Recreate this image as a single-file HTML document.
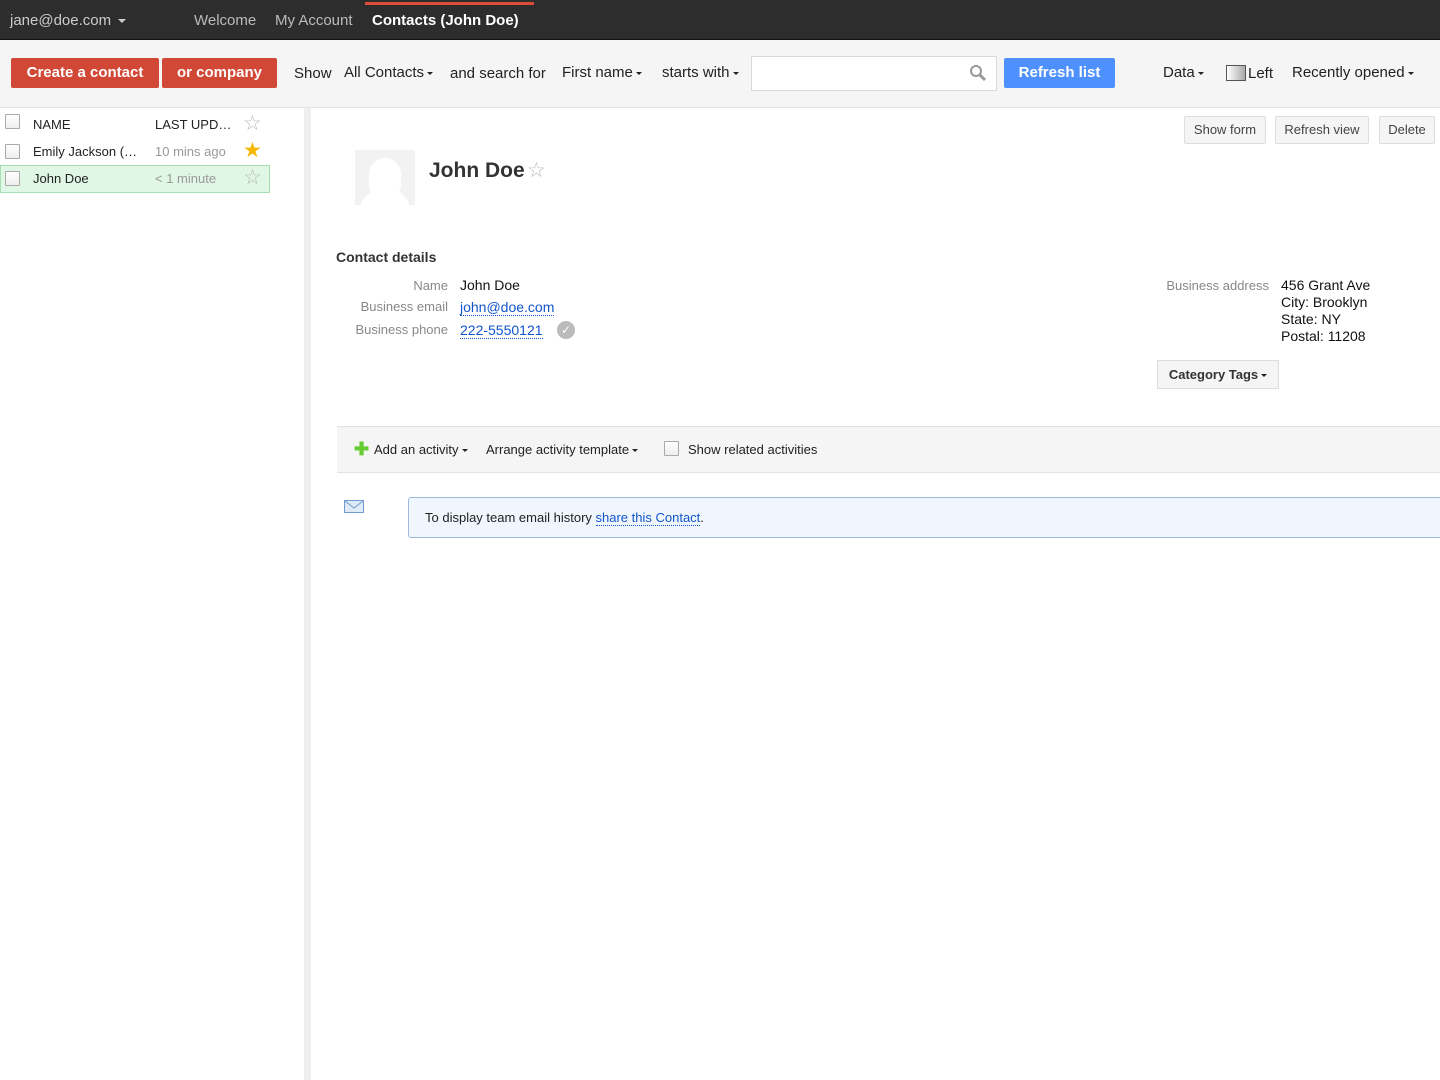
<!DOCTYPE html>
<html><head><meta charset="utf-8"><style>
*{box-sizing:border-box;margin:0;padding:0}
body{width:1440px;height:1080px;overflow:hidden;background:#fff;font-family:"Liberation Sans",sans-serif;color:#222;position:relative}
.a{position:absolute;white-space:nowrap}
.top{position:absolute;left:0;top:0;width:1440px;height:40px;background:#2d2d2d;border-bottom:1px solid #111}
.tb{position:absolute;left:0;top:40px;width:1440px;height:68px;background:#f5f5f5;border-bottom:1px solid #e4e4e4}
.btn{position:absolute;background:#d14836;color:#fff;font-weight:bold;font-size:15px;text-align:center;line-height:30px;border-radius:2px;height:30px;top:58px}
.car{display:inline-block;width:0;height:0;border-left:3px solid transparent;border-right:3px solid transparent;border-top:3px solid #222;vertical-align:middle;margin-left:3px}
.cb{position:absolute;width:15px;height:15px;border:1px solid #aaa;background:linear-gradient(#fff,#eee);border-radius:1px}
.gbtn{position:absolute;top:116px;height:28px;background:#f5f5f5;border:1px solid #ddd;border-radius:2px;font-size:13px;color:#444;line-height:26px;text-align:center}
.lab{position:absolute;font-size:13px;color:#888;text-align:right;width:140px;white-space:nowrap}
.val{position:absolute;font-size:14px;color:#111;white-space:nowrap}
.lnk{color:#15c;border-bottom:1px dotted #15c}
</style></head><body>
<div class="top"></div>
<div class="a" style="left:365px;top:2px;width:169px;height:3px;background:#dd4b39"></div>
<div class="a" style="left:10px;top:12px;font-size:15px;color:#ccc">jane@doe.com <span class="car" style="border-top-color:#ccc;border-width:4px 4px 0"></span></div>
<div class="a" style="left:194px;top:12px;font-size:15px;color:#bbb">Welcome</div>
<div class="a" style="left:275px;top:12px;font-size:15px;color:#bbb">My Account</div>
<div class="a" style="left:372px;top:12px;font-size:15px;color:#fff;font-weight:bold">Contacts (John Doe)</div>

<div class="tb"></div>
<div class="btn" style="left:11px;width:148px">Create a contact</div>
<div class="btn" style="left:162px;width:115px">or company</div>
<div class="a" style="left:294px;top:65px;font-size:15px">Show</div>
<div class="a" style="left:344px;top:64px;font-size:15px">All Contacts<span class="car"></span></div>
<div class="a" style="left:450px;top:65px;font-size:15px">and search for</div>
<div class="a" style="left:562px;top:64px;font-size:15px">First name<span class="car"></span></div>
<div class="a" style="left:662px;top:64px;font-size:15px">starts with<span class="car"></span></div>
<div class="a" style="left:751px;top:56px;width:246px;height:35px;background:#fff;border:1px solid #d9d9d9"></div>
<svg class="a" style="left:968px;top:63px" width="20" height="20" viewBox="0 0 20 20"><circle cx="8" cy="8" r="5" fill="none" stroke="#999" stroke-width="2"/><path d="M12 12l5 5" stroke="#999" stroke-width="3"/></svg>
<div class="a" style="left:1004px;top:58px;width:111px;height:30px;background:#4d90fe;border-radius:2px;color:#fff;font-weight:bold;font-size:15px;text-align:center;line-height:30px">Refresh list</div>
<div class="a" style="left:1163px;top:64px;font-size:15px">Data<span class="car"></span></div>
<div class="a" style="left:1226px;top:65px;width:20px;height:16px;border:1px solid #555;background:linear-gradient(90deg,#fff,#aaa)"></div>
<div class="a" style="left:1248px;top:65px;font-size:15px">Left</div>
<div class="a" style="left:1292px;top:64px;font-size:15px">Recently opened<span class="car"></span></div>

<div class="a" style="left:304px;top:108px;width:7px;height:972px;background:#efefef"></div>
<div class="cb" style="left:5px;top:114px"></div>
<div class="a" style="left:33px;top:117px;font-size:13px">NAME</div>
<div class="a" style="left:155px;top:117px;font-size:13px">LAST UPD…</div>
<div class="a" style="left:243px;top:111px;font-size:21px;color:#bbb">☆</div>
<div class="cb" style="left:5px;top:144px"></div>
<div class="a" style="left:33px;top:144px;font-size:13px">Emily Jackson (…</div>
<div class="a" style="left:155px;top:144px;font-size:13px;color:#999">10 mins ago</div>
<div class="a" style="left:243px;top:138px;font-size:21px;color:#f6b800">★</div>
<div class="a" style="left:0;top:165px;width:270px;height:28px;background:#dff7e4;border:1px solid #a7dfb1"></div>
<div class="cb" style="left:5px;top:171px"></div>
<div class="a" style="left:33px;top:171px;font-size:13px">John Doe</div>
<div class="a" style="left:155px;top:171px;font-size:13px;color:#999">&lt; 1 minute</div>
<div class="a" style="left:243px;top:165px;font-size:21px;color:#bbb">☆</div>

<div class="gbtn" style="left:1184px;width:82px">Show form</div>
<div class="gbtn" style="left:1275px;width:94px">Refresh view</div>
<div class="gbtn" style="left:1379px;width:56px">Delete</div>

<div class="a" style="left:355px;top:150px;width:60px;height:55px;background:#f2f2f2;overflow:hidden"><div style="position:absolute;left:14px;top:8px;width:32px;height:38px;border-radius:16px 16px 10px 10px;background:#fff"></div><div style="position:absolute;left:5px;top:40px;width:50px;height:30px;border-radius:20px 20px 0 0;background:#fff"></div></div>
<div class="a" style="left:429px;top:159px;font-size:21px;font-weight:bold;color:#333">John Doe</div>
<div class="a" style="left:527px;top:158px;font-size:21px;color:#bbb">☆</div>

<div class="a" style="left:336px;top:249px;font-size:14px;font-weight:bold;color:#333">Contact details</div>
<div class="lab" style="left:308px;top:278px">Name</div>
<div class="val" style="left:460px;top:277px">John Doe</div>
<div class="lab" style="left:308px;top:299px">Business email</div>
<div class="val" style="left:460px;top:299px"><span class="lnk">john@doe.com</span></div>
<div class="lab" style="left:308px;top:322px">Business phone</div>
<div class="val" style="left:460px;top:322px"><span class="lnk">222-5550121</span></div>
<div class="a" style="left:557px;top:321px;width:18px;height:18px;border-radius:50%;background:#bbb;color:#fff;font-size:12px;text-align:center;line-height:18px">✓</div>

<div class="lab" style="left:1129px;top:278px">Business address</div>
<div class="val" style="left:1281px;top:277px;line-height:17px">456 Grant Ave<br>City: Brooklyn<br>State: NY<br>Postal: 11208</div>
<div class="a" style="left:1157px;top:360px;width:122px;height:29px;background:#f5f5f5;border:1px solid #ddd;font-size:13px;font-weight:bold;color:#333;line-height:27px;text-align:center">Category Tags<span class="car"></span></div>

<div class="a" style="left:337px;top:426px;width:1103px;height:47px;background:#f5f5f5;border-top:1px solid #e2e2e2;border-bottom:1px solid #e2e2e2"></div>
<div class="a" style="left:354px;top:440px;font-size:18px;color:#6c3;font-weight:bold;line-height:18px">✚</div>
<div class="a" style="left:374px;top:442px;font-size:13px">Add an activity<span class="car"></span></div>
<div class="a" style="left:486px;top:442px;font-size:13px">Arrange activity template<span class="car"></span></div>
<div class="cb" style="left:664px;top:441px"></div>
<div class="a" style="left:688px;top:442px;font-size:13px">Show related activities</div>

<svg class="a" style="left:344px;top:500px" width="20" height="13" viewBox="0 0 20 13"><rect x="0.5" y="0.5" width="19" height="12" fill="#dfeaf7" stroke="#6f9bd1"/><path d="M1 1l9 7 9-7" fill="none" stroke="#6f9bd1"/></svg>
<div class="a" style="left:408px;top:497px;width:1040px;height:41px;background:#f0f6fe;border:1px solid #9fb8dd;border-radius:3px"></div>
<div class="a" style="left:425px;top:510px;font-size:13px">To display team email history <span class="lnk">share this Contact</span>.</div>
</body></html>
